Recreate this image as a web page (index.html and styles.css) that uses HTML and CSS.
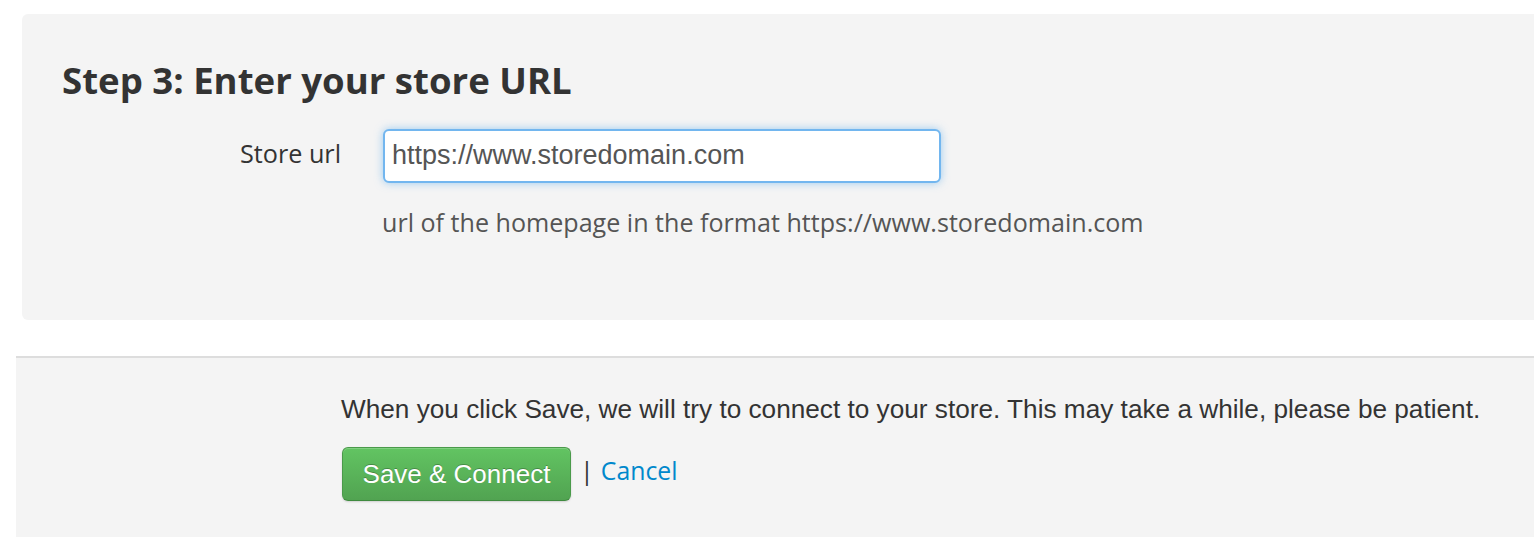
FILE: index.html
```html
<!DOCTYPE html>
<html>
<head>
<meta charset="utf-8">
<link rel="stylesheet" href="styles.css">
</head>
<body>
<section class="panel">
  <h3 class="step-title">Step 3: Enter your store URL</h3>
  <div class="form-row">
    <label class="form-label" for="store-url">Store url</label>
    <div class="form-controls">
      <input class="form-input" id="store-url" type="text" value="https://www.storedomain.com">
      <p class="help-text">url of the homepage in the format https://www.storedomain.com</p>
    </div>
  </div>
</section>
<footer class="actions">
  <p class="actions-note">When you click Save, we will try to connect to your store. This may take a while, please be patient.</p>
  <div class="actions-buttons">
    <button class="btn-success" type="button">Save &amp; Connect</button>
    <span class="sep">|</span>
    <a class="cancel-link" href="#">Cancel</a>
  </div>
</footer>
</body>
</html>
```

FILE: styles.css
```css
html, body {
  margin: 0;
  padding: 0;
  background: #ffffff;
}

body {
  font-family: "Liberation Sans", Arial, sans-serif;
  color: #333333;
  overflow: hidden;
}

.panel {
  margin: 14px 0 0 22px;
  height: 306px;
  box-sizing: border-box;
  background: #f4f4f4;
  border-radius: 6px 0 0 6px;
  padding: 44px 0 0 40px;
}

.step-title {
  margin: 0;
  font-family: "Open Sans", sans-serif;
  font-weight: 700;
  font-size: 36.6px;
  line-height: 44px;
  color: #333333;
}

.form-row {
  display: flex;
  margin-top: 27px;
}

.form-label {
  width: 279px;
  box-sizing: border-box;
  text-align: right;
  padding-top: 9px;
  font-family: "Open Sans", sans-serif;
  font-size: 25.2px;
  line-height: 30px;
  color: #333333;
}

.form-controls {
  margin-left: 42px;
}

.form-input {
  display: block;
  width: 558px;
  height: 54px;
  box-sizing: border-box;
  margin: 0;
  padding: 0 7px 2px;
  border: 2px solid #72b6ef;
  border-radius: 6px;
  background: #ffffff;
  box-shadow: 0 0 8px rgba(82, 168, 236, 0.55);
  font-family: "Liberation Sans", Arial, sans-serif;
  font-size: 27px;
  color: #555555;
  outline: none;
}

.help-text {
  margin: 24px 0 0 -1px;
  font-family: "Open Sans", sans-serif;
  font-size: 25.1px;
  line-height: 30px;
  color: #555555;
  white-space: nowrap;
}

.actions {
  margin: 36px 0 0 16px;
  height: 181px;
  box-sizing: border-box;
  border-top: 2px solid #dddddd;
  background: #f4f4f4;
  padding: 34px 0 0 325px;
}

.actions-note {
  margin: 0;
  font-size: 26.2px;
  line-height: 34px;
  color: #333333;
  white-space: nowrap;
}

.actions-buttons {
  display: flex;
  align-items: flex-start;
  margin-top: 21px;
}

.btn-success {
  width: 229px;
  height: 54px;
  box-sizing: border-box;
  margin: 0 0 0 1px;
  padding: 0;
  border: 1px solid #4a9a4a;
  border-bottom-color: #3f8a3f;
  border-radius: 6px;
  background: linear-gradient(to bottom, #62c462, #51a351);
  box-shadow: inset 0 1px 0 rgba(255, 255, 255, 0.2), 0 1px 2px rgba(0, 0, 0, 0.15);
  font-family: "Liberation Sans", Arial, sans-serif;
  font-size: 26px;
  color: #ffffff;
  text-shadow: 0 -1px 0 rgba(0, 0, 0, 0.25);
  cursor: pointer;
}

.sep {
  margin: 8px 0 0 9px;
  font-family: "Open Sans", sans-serif;
  font-size: 25.2px;
  line-height: 30px;
  color: #333333;
}

.cancel-link {
  margin: 8px 0 0 7px;
  font-family: "Open Sans", sans-serif;
  font-size: 24.8px;
  line-height: 30px;
  color: #0088cc;
  text-decoration: none;
}
```
